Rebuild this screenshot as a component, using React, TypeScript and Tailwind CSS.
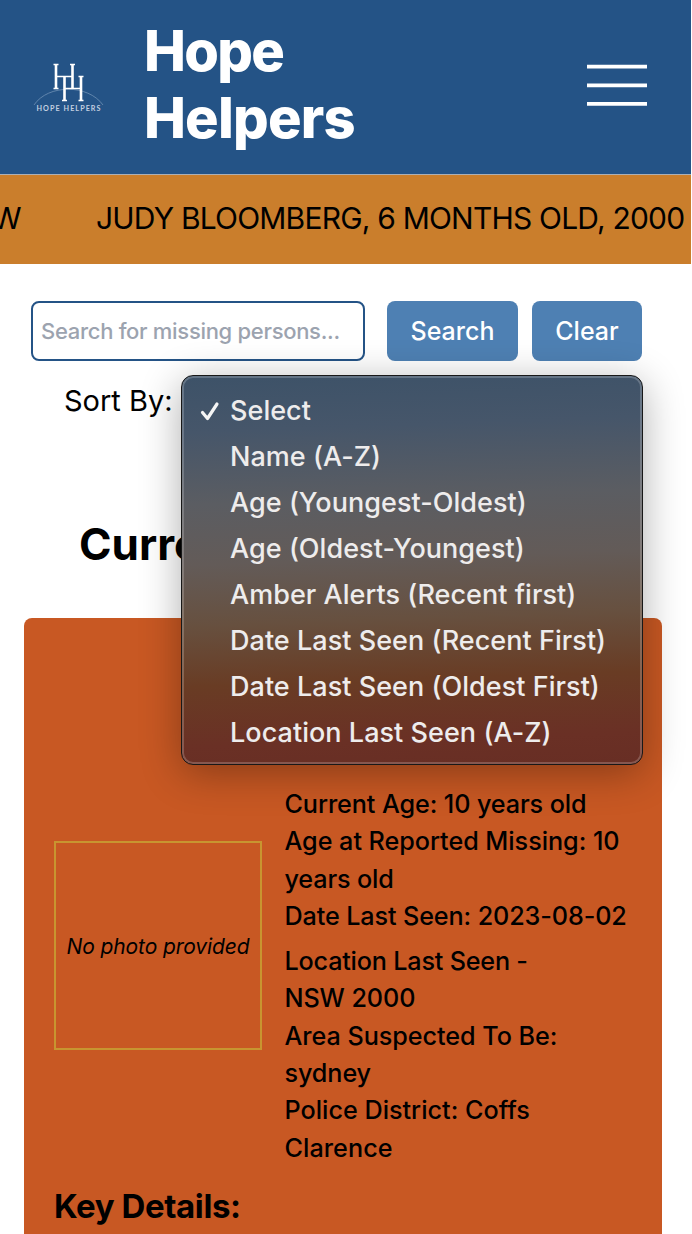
const options = [
  "Select",
  "Name (A-Z)",
  "Age (Youngest-Oldest)",
  "Age (Oldest-Youngest)",
  "Amber Alerts (Recent first)",
  "Date Last Seen (Recent First)",
  "Date Last Seen (Oldest First)",
  "Location Last Seen (A-Z)",
];

function Logo() {
  return (
    <svg className="ml-[33px] mt-[2px] h-[56px] w-[72px] shrink-0" viewBox="33 60 72 56" fill="none">
      <path d="M34 105C48 84 88 84 103 105" stroke="#6f90b5" strokeWidth="0.8" />
      <path d="M56 64.500V88.500M72.500 64.500V88M64.500 77V100.500M81 76.500V100.500" stroke="#fff" strokeWidth="2.600" />
      <path d="M56 76.500H72.500M64.500 88.500H81M53.500 64.500H58.500M70 64.500H75M53.500 88.500H58.500M62 100.500H67M78.500 100.500H83.500M78.500 76.500H83.500" stroke="#fff" strokeWidth="1.500" />
      <text x="36.500" y="111" fill="#c3d0e0" fontFamily="Lato, sans-serif" fontSize="7.200" fontWeight="700" textLength="64" lengthAdjust="spacing">HOPE HELPERS</text>
    </svg>
  );
}

function Header() {
  return (
    <header className="flex h-[174px] items-start bg-[#245386]">
      <div className="flex h-full items-center"><Logo /></div>
      <h1 className="ml-[39px] mt-[18px] w-[240px] text-[56px] font-extrabold leading-[67px] text-white">
        <span className="tracking-[-1.7px]">Hope</span><br /><span className="tracking-[-0.8px]">Helpers</span>
      </h1>
      <button aria-label="Menu" className="ml-auto mr-[44px] mt-[64px]">
        <svg width="60" height="44" viewBox="0 0 60 44" stroke="#fff" strokeWidth="3.800">
          <path d="M0 2.600H60M0 21.300H60M0 39.900H60" />
        </svg>
      </button>
    </header>
  );
}

function Ticker() {
  return (
    <div className="flex h-[90px] items-center overflow-hidden whitespace-nowrap border-t border-[#adafb4] bg-[#ca7e2c] pb-[4px] text-[30px] leading-none text-black">
      <span className="-ml-[8px] w-[104px] shrink-0">W</span>
      <span className="tracking-[-0.8px]">JUDY BLOOMBERG, 6 MONTHS OLD, 2000</span>
    </div>
  );
}

function SortMenu() {
  return (
    <ul className="absolute left-[181px] top-0 z-10 h-[390px] w-[462px] rounded-[12px] border border-[#181818] bg-[linear-gradient(178deg,#3d5268_0%,#46566a_14%,#5b5d62_32%,#635b58_47%,#67503f_62%,#693c24_77%,#6a3025_92%,#682e24_100%)] pt-[10px] text-[27px] text-[#eeecec] shadow-[inset_0_0_0_2px_rgba(255,255,255,0.2),0_8px_40px_rgba(0,0,0,0.32)]">
      {options.map((label, i) => (
        <li key={label} className="flex h-[46px] items-center whitespace-nowrap pl-[17px] pt-px">
          <span className="w-[31px]">
            {i === 0 && (
              <svg className="mt-[2px]" width="22" height="24" viewBox="0 0 22 24" fill="none">
                <path d="M3.500 13.500L8.500 19.500L18 5" stroke="#f5f5f5" strokeWidth="3.200" strokeLinecap="round" strokeLinejoin="round" />
              </svg>
            )}
          </span>
          <span className="pt-[3px] font-[450] tracking-[0.04px]">{label}</span>
        </li>
      ))}
    </ul>
  );
}

const details = [
  { text: "Current Age: 10 years old", style: "tracking-[-0.1px]" },
  { text: "Age at Reported Missing: 10", style: "tracking-[-0.04px]" },
  { text: "years old", style: "tracking-[-0.15px]" },
  { text: "Date Last Seen: 2023-08-02", style: "tracking-[-0.12px]" },
  { text: "Location Last Seen -", style: "mt-[8px] tracking-[-0.2px]" },
  { text: "NSW 2000", style: "tracking-[-0.1px]" },
  { text: "Area Suspected To Be:", style: "tracking-[-0.05px]" },
  { text: "sydney", style: "tracking-[-0.1px]" },
  { text: "Police District: Coffs", style: "" },
  { text: "Clarence", style: "tracking-[0.05px]" },
];

export default function App() {
  return (
    <div className="h-[1234px] overflow-hidden bg-white font-['Inter','Liberation_Sans',sans-serif] text-black">
      <div className="mr-px"><Header /><Ticker /></div>
      <div className="flex pl-[31px] pt-[37px] text-[25px]">
        <input className="h-[60px] w-[334px] rounded-[8px] border-2 border-[#245386] bg-white px-[8px] text-[22px] font-medium tracking-[-0.3px] placeholder:text-[#9ca3af]" placeholder="Search for missing persons..." />
        <button className="ml-[22px] h-[60px] w-[131px] rounded-[8px] bg-[#4e80b3] pt-px font-medium text-white">Search</button>
        <button className="ml-[14px] h-[60px] w-[110px] rounded-[8px] bg-[#4e80b3] pt-px font-medium text-white">Clear</button>
      </div>
      <div className="relative mt-[14px] h-[243px]">
        <label className="block pl-[64px] pt-[8px] text-[29px] leading-[36px]">Sort By:</label>
        <h2 className="pl-[79px] pt-[97px] text-[44px] font-bold leading-[56px]">Current</h2>
        <SortMenu />
      </div>
      <article className="ml-[24px] h-[616px] w-[638px] rounded-t-[8px] bg-[#c85823] pl-[30px] pt-[168px] text-[25.2px]">
        <div className="flex">
          <div className="mt-[55px] flex h-[209px] w-[208px] items-center justify-center whitespace-nowrap border-2 border-[#c89530] pt-[2px] text-[21px] italic tracking-[-0.1px]">No photo provided</div>
          <div className="ml-[22.500px] font-[450] leading-[37.3px]">
            {details.map((line) => (
              <p key={line.text} className="whitespace-nowrap">
                <span className={`block ${line.style}`}>{line.text}</span>
              </p>
            ))}
          </div>
        </div>
        <h3 className="pt-[17px] text-[33px] font-bold leading-[44px] tracking-[-0.4px]">Key Details:</h3>
      </article>
    </div>
  );
}
